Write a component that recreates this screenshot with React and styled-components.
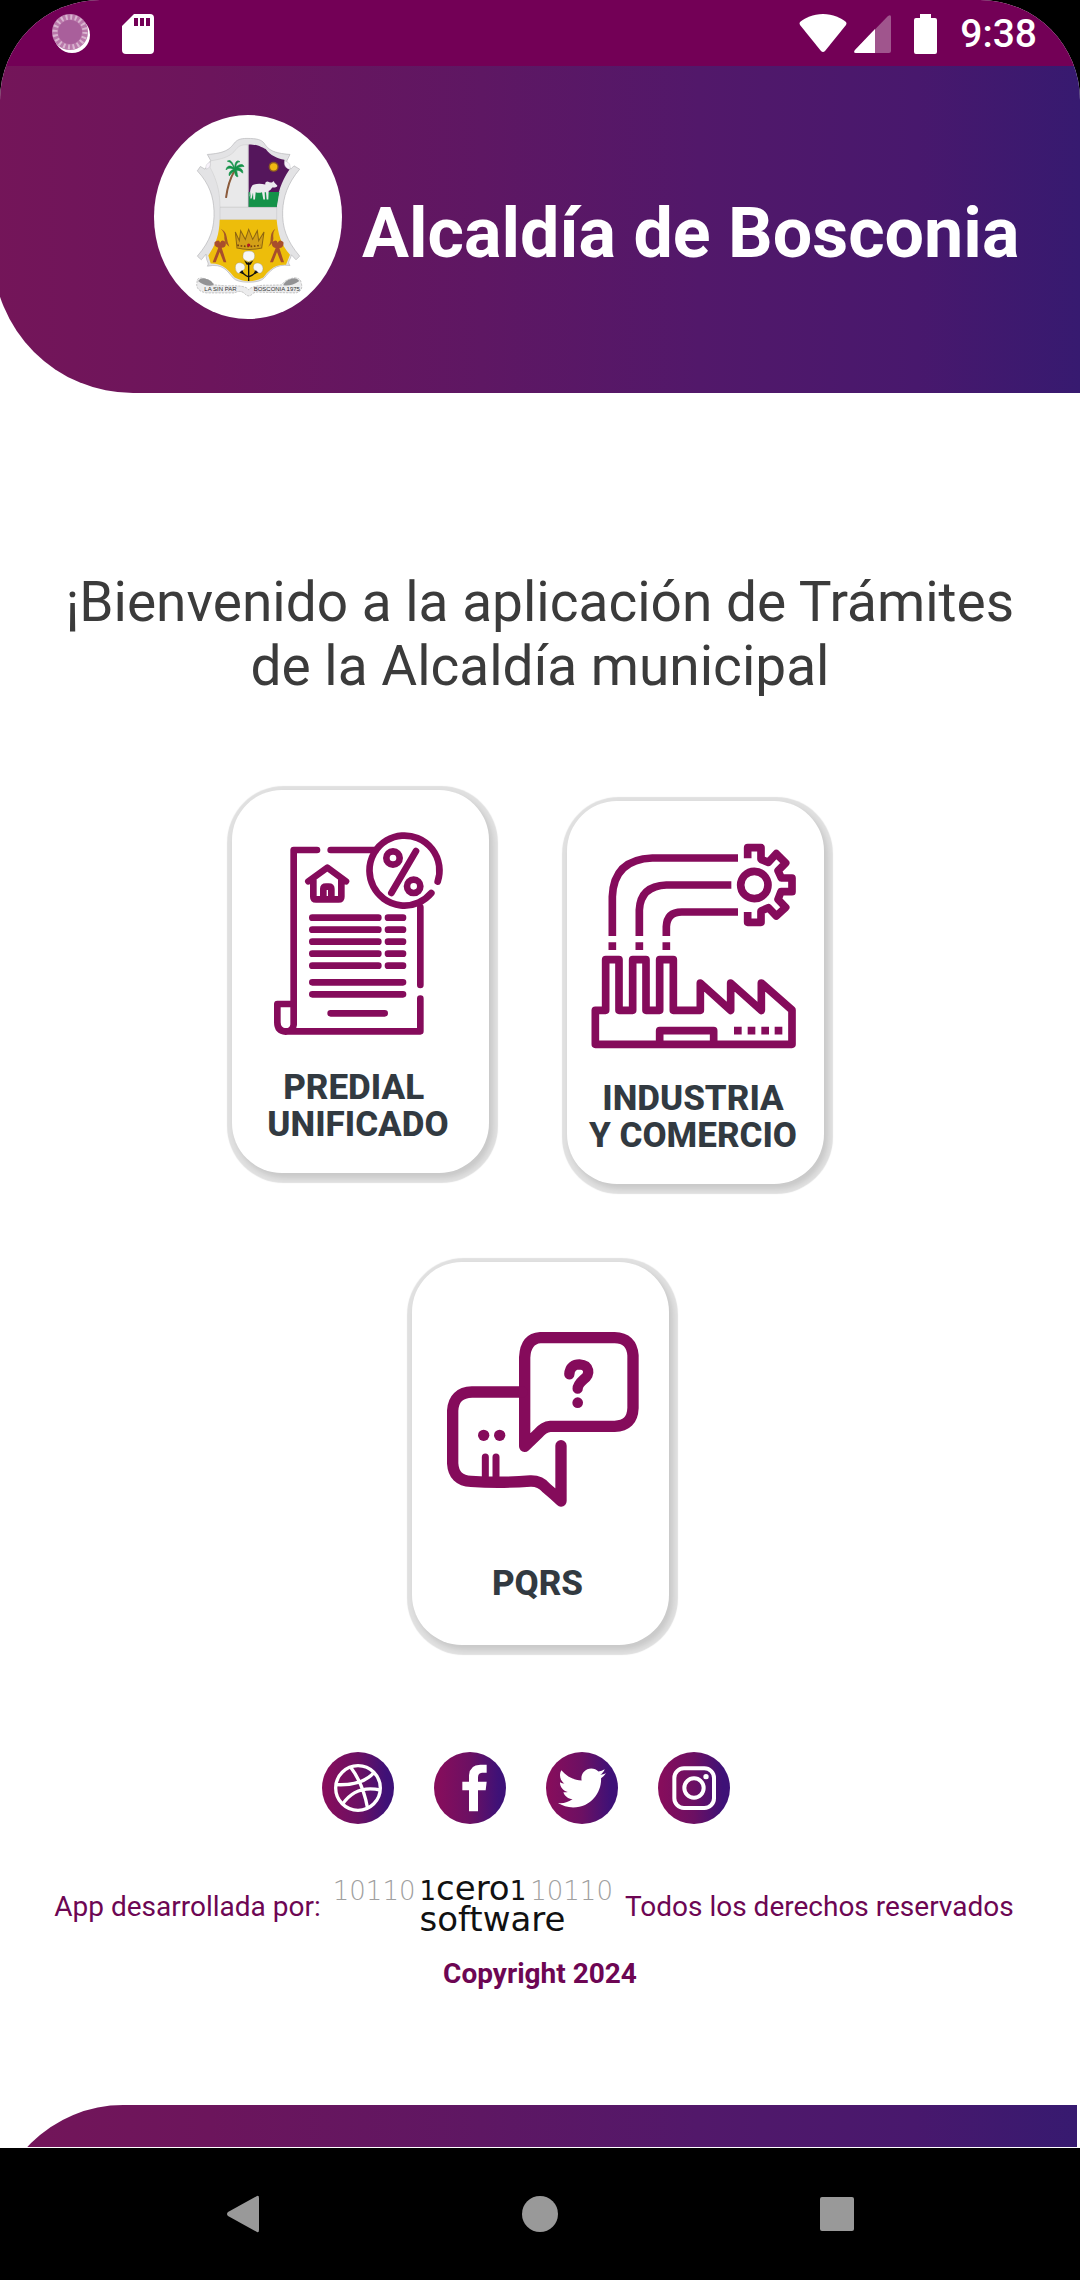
import React from 'react';
import styled, { createGlobalStyle } from 'styled-components';
import { FaTwitter } from 'react-icons/fa';

const PLUM = '#850b5b';
const band = 'linear-gradient(90deg, #741559 0%, #6c155c 20%, #5e1763 45%, #52186a 65%, #48186d 85%, #371a70 100%)';

const GlobalStyle = createGlobalStyle`
  * { box-sizing: border-box; }
  body { margin: 0; background: #000; font-family: Roboto, 'Liberation Sans', sans-serif; }
  a, button { -webkit-tap-highlight-color: transparent; }
`;

const Phone = styled.div`
  min-height: 100vh;
  display: flex;
  flex-direction: column;
  background: #000;
`;

const Screen = styled.div`
  flex: 1;
  display: flex;
  flex-direction: column;
  background: #fff;
  border-radius: 100px 100px 0 0;
  overflow: hidden;
`;

const StatusBar = styled.div`
  height: 66px;
  flex: none;
  display: flex;
  align-items: center;
  justify-content: space-between;
  padding: 2px 43px 0 52px;
  background: #730056;
  color: #fff;
`;

const StatusGroup = styled.div`
  display: flex;
  align-items: center;
  gap: ${(p) => p.$gap}px;
`;

const Clock = styled.time`
  font-size: 39px;
  line-height: 44px;
  font-weight: 500;
`;

const Header = styled.header`
  height: 327px;
  flex: none;
  margin-left: -7px;
  padding: 0 64px 0 161px;
  display: flex;
  align-items: center;
  gap: 20px;
  background: ${band};
  border-bottom-left-radius: 140px;
`;

const Crest = styled.svg`
  width: 188px;
  height: 204px;
  flex: none;
  margin-bottom: 26px;
`;

const Title = styled.h1`
  margin: 0;
  padding-top: 6px;
  color: #fff;
  font-size: 70px;
  line-height: 80px;
  font-weight: 700;
  white-space: nowrap;
`;

const Main = styled.main`
  flex: 1;
  display: flex;
  flex-direction: column;
  align-items: center;
  padding-top: 177px;
`;

const Welcome = styled.h2`
  margin: 0 60px;
  color: #3b3b3b;
  font-size: 55px;
  line-height: 64px;
  font-weight: 400;
  text-align: center;
`;

const CardRow = styled.div`
  display: flex;
  justify-content: center;
  align-items: flex-end;
  gap: 78px;
  margin-top: ${(p) => p.$top}px;
  padding-right: ${(p) => p.$shift || 0}px;
`;

const Card = styled.button`
  width: 257px;
  height: 383px;
  margin: 0 0 ${(p) => p.$lift || 0}px;
  padding: 0;
  border: 0;
  border-radius: 50px;
  background: #fff;
  display: flex;
  flex-direction: column;
  align-items: center;
  box-shadow: 3px 4px 5px 1px rgba(0, 0, 0, 0.1), 2px 3px 1px 7px #e0e0e0;
  cursor: pointer;
`;

const CardArt = styled.svg`
  width: 257px;
  height: 273px;
  flex: none;
  fill: none;
  stroke: ${PLUM};
  stroke-width: 20;
  stroke-linecap: round;
  stroke-linejoin: round;
`;

const CardLabel = styled.span`
  padding-top: ${(p) => p.$top}px;
  padding-right: 5px;
  color: #323a41;
  font: 800 35px/37px Roboto, 'Liberation Sans', sans-serif;
  text-align: center;
  white-space: pre-line;
`;

const Social = styled.nav`
  display: flex;
  gap: 40px;
  margin-top: 107px;
  padding-right: 28px;
`;

const SocialLink = styled.a`
  width: 72px;
  height: 72px;
  border-radius: 50%;
  display: flex;
  align-items: center;
  justify-content: center;
  color: #fff;
  background: linear-gradient(90deg, #860d5c 5%, #6c1063 50%, #3e1177 90%);

  svg { width: 48px; height: 48px; }
`;

const Credits = styled.footer`
  width: 100%;
  padding-top: 50px;
  display: flex;
  flex-direction: column;
  align-items: center;
  color: #6d0653;
  font-size: 28px;
  line-height: 32px;
`;

const CreditLine = styled.div`
  display: flex;
  justify-content: center;
  align-items: center;
  gap: 12px;
  padding-right: 12px;
  white-space: nowrap;
`;

const Maker = styled.div`
  display: grid;
  grid-template-columns: auto auto auto;
  column-gap: 4px;
  align-items: baseline;
  padding-bottom: 6px;
  color: #111;
  font-family: 'DejaVu Sans', sans-serif;
  font-size: 34px;
  line-height: 28px;
`;

const Digits = styled.span`
  font-size: 26px;
  color: #a0a0a0;
  font-family: 'DejaVu Sans Light', 'DejaVu Sans', sans-serif;
  font-weight: 200;
`;

const MakerName = styled.span`
  display: flex;
  align-items: baseline;
`;

const MakerDigit = styled.span`
  font-size: 26px;
`;

const MakerKind = styled.span`
  grid-column: 2 / 4;
`;

const Copyright = styled.strong`
  margin-top: 19px;
  font-weight: 700;
`;

const BottomBand = styled.div`
  height: 43px;
  flex: none;
  margin: 0 3px 0 -7px;
  overflow: hidden;
  border-bottom: 1px solid #fff;
`;

const BandShape = styled.div`
  height: 140px;
  background: ${band};
  border-top-left-radius: 130px;
`;

const NavBar = styled.nav`
  height: 132px;
  flex: none;
  display: grid;
  grid-template-columns: repeat(3, 1fr);
  padding: 0 94px;
`;

const NavButton = styled.button`
  border: 0;
  padding: 0;
  background: none;
  display: flex;
  align-items: center;
  justify-content: center;

  svg { width: 38px; height: 38px; fill: #999; }
`;

function Loader() {
  return (
    <svg width="38" height="42" viewBox="0 0 38 42" aria-hidden="true">
      <circle cx="20" cy="22" r="18" fill="#fff" />
      <circle cx="18" cy="19" r="18" fill="#b978aa" />
      <circle cx="18" cy="19" r="15" fill="none" stroke="#d9b4d0" strokeWidth="5" strokeDasharray="2 2.7" />
      <circle cx="18" cy="19" r="12" fill="#a95f9b" />
    </svg>
  );
}

function SdCard() {
  return (
    <svg width="32" height="40" viewBox="0 0 32 40" aria-hidden="true">
      <path d="M12 0h16a4 4 0 0 1 4 4v32a4 4 0 0 1-4 4H4a4 4 0 0 1-4-4V12z" fill="#fff" />
      <path d="M12 4h4v8h-4zM18 4h4v8h-4zM24 4h4v8h-4z" fill="#730056" />
    </svg>
  );
}

function Wifi() {
  return (
    <svg width="48" height="40" viewBox="0 0 48 40" aria-hidden="true">
      <path d="M24 0C14 0 6 4 1 8q-1 1 0 3l21 26q2 2 4 0l21-26q1-2 0-3C42 4 34 0 24 0z" fill="#fff" />
    </svg>
  );
}

function Signal() {
  return (
    <svg width="38" height="38" viewBox="0 0 38 38" aria-hidden="true">
      <path d="M34 1q3-2 3 1v34q0 2-2 2H2q-3 0-1-3z" fill="#a0558d" />
      <path d="M21 14v24H2q-3 0-1-3z" fill="#fff" />
    </svg>
  );
}

function Battery() {
  return (
    <svg width="24" height="40" viewBox="0 0 24 40" aria-hidden="true">
      <path d="M6 0h11v4h4q2 0 2 2v32q0 2-2 2H2q-2 0-2-2V6q0-2 2-2h4z" fill="#fff" />
    </svg>
  );
}

function Shield() {
  const frame =
    'M171 114C151 114 141 118 133 128C118 148 104 158 52 162L62 180L45 206L31 198L22 211C60 252 70 290 72 330C74 380 62 420 22 466L34 477L48 460C48 484 60 486 52 496C100 486 112 512 130 532Q142 544 176 544Q210 544 222 532C240 512 254 488 300 494C290 482 302 478 304 462L318 477L329 466C290 420 276 380 278 330C280 290 292 250 329 206L312 196L302 206L290 182L300 162C248 158 236 148 222 128C214 118 202 114 171 114Z';
  return (
    <Crest viewBox="-108 44 564 610" preserveAspectRatio="none" role="img" aria-label="Escudo de Bosconia">
      <ellipse cx="174" cy="349" rx="282" ry="305" fill="#fff" />
      <path d={frame} fill="#e3e3e5" stroke="#b5b5b8" strokeWidth="2" />
      <path d="M174 133C150 132 145 138 132 154C116 170 95 176 62 181L60 200C84 244 90 282 90 320H174Z" fill="#e9e9ea" stroke="#bcbcbc" strokeWidth="1" />
      <path d="M176 132C206 132 214 140 227 146C241 166 262 174 283 178C286 194 292 204 299 206C272 246 264 274 260 320H176Z" fill="#55165c" />
      <path d="M176 274H268L260 320H176Z" fill="#149249" />
      <path d="M90 320H260V357H90Z" fill="#e3e3e5" stroke="#b5b5b8" strokeWidth="1" />
      <path d="M89 357H260C264 398 272 430 300 462L288 492C248 490 232 516 220 530Q176 552 134 530C118 512 102 488 62 488L55 464C78 430 88 400 89 357Z" fill="#edbd0b" />
      <path d="M284 181q22 6 15 26q-20-6-15-26zM61 184q-18 8-12 22q14-4 12-22z" fill="#f7f2fa" stroke="#b5b5b8" strokeWidth="1" />
      <path d="M134 210C120 234 112 260 108 292" stroke="#8b5b3c" strokeWidth="6" fill="none" />
      <path d="M134 204C126 180 120 178 112 182C122 184 128 192 131 202C118 192 110 198 108 208C118 200 126 204 131 207C118 210 116 220 118 226C124 216 130 214 134 210C134 226 140 230 144 228C140 220 142 212 139 209C150 208 156 216 158 218C160 206 150 202 142 203C150 198 158 198 162 198C158 188 146 192 138 200C138 188 144 184 150 184C140 176 134 186 134 204Z" fill="#149249" stroke="#149249" strokeWidth="2" />
      <circle cx="251" cy="199" r="15" fill="#8c5c22" />
      <circle cx="251" cy="199" r="11" fill="#f0ba10" />
      <path d="M188 253q18-7 38-1q-2-9 7-9q8 4 14 2q5-6 6 1l8 8q4 5-6 7l-8 0q-5 8-11 10l-1 26h-5l-2-22l-4 0l1 22h-5l-4-22q-10 3-19 0l-2 22h-5l-1-21l-4 18h-4l2-25q-2 14-4 20q-1-24 9-36z" fill="#ecebee" />
      <path d="M92 384q16 8 18 24t8 30q-16-12-15-28t-11-26zM256 384q-14 10-14 28t-8 26q18-12 16-28t6-26z" fill="#a65a26" />
      <path d="M74 424q14-10 16 2q6-12 17-2q3 16-12 17l14 43h-8l-12-30l-12 30h-9l17-43q-14-4-11-17zM246 424q14-10 17 2q6-12 17-2q3 16-12 18l14 42h-9l-12-30l-12 30h-9l17-42q-14-4-11-18z" fill="#a84e2c" />
      <path d="M136 394l12 26l4-30l14 26l10-30l12 30l14-26l4 30l16-26l-7 48q-39 8-74 0z" fill="#d3a017" stroke="#8c6511" strokeWidth="3" />
      <path d="M142 433q34 8 70 0" fill="none" stroke="#75430d" strokeWidth="5" strokeDasharray="5 5" />
      <circle cx="176" cy="433" r="5" fill="#b51b24" />
      <path d="M176 484v56M176 528q-16-6-22-20M176 528q18-6 26-20" stroke="#111" strokeWidth="4" fill="none" />
      <path d="M162 478l14 9l14-9l-8 14h-12zM140 512l18-8l2 16zM212 512l-16-8l-4 16z" fill="#111" />
      <g fill="#f7f7f5" stroke="#888" strokeWidth="1">
        <path d="M159 464q0-14 17-13q18-1 18 14q0 14-12 15l-6 3l-7-3q-12-4-10-16z" />
        <path d="M136 500q0-16 16-14q16 4 12 18q-4 6-10 6l-8 8q-10-4-10-18z" />
        <path d="M190 500q0-16 17-13q12 4 12 16q-1 14-12 14l-8-7q-10-2-9-10z" />
      </g>
      <path d="M22 536Q28 528 46 534Q66 540 72 552L110 555Q166 552 176 566Q190 552 238 553L276 552Q284 536 312 531Q332 530 334 548Q340 570 318 576L210 574Q196 572 188 578Q176 592 164 578Q150 566 134 576L50 576Q22 572 20 552Z" fill="#ececed" stroke="#aaa" strokeWidth="2" strokeDasharray="7 3" />
      <path d="M24 540q10-14 32-3q14 8 15 16q-24 6-47-13zM328 540q-10-14-32-3q-14 8-16 16q24 4 48-13z" fill="#929294" />
      <g fill="#333" fontFamily="'Liberation Sans', sans-serif" fontSize="18">
        <text x="43" y="571">LA SIN PAR</text>
        <text x="191" y="571">BOSCONIA 1975</text>
      </g>
    </Crest>
  );
}

function TaxArt() {
  return (
    <CardArt viewBox="35 31 771 819" aria-hidden="true">
      <path d="M290 211H220V735Q218 756 196 756Q171 754 171 728V673H212M331 211H466M600 382V616M600 657V755H196" />
      <path d="M633 340A105 105 0 1 1 652 306" />
      <path d="M587 214L513 340" />
      <circle cx="518" cy="235" r="20" />
      <circle cx="580" cy="320" r="20" />
      <path d="M264 305L321 264L377 305M279 302V351Q279 359 287 359H355Q363 359 363 351V302M309 358V328Q309 321 317 321H325Q333 321 333 328V358" />
      <path d="M276 414H474M503 414H548M276 450H474M503 450H548M276 486H474M503 486H548M276 522H474M503 522H548M276 558H474M503 558H548M276 608H548M276 644H548M331 701H493" />
    </CardArt>
  );
}

function FactoryArt() {
  return (
    <CardArt viewBox="52 63 771 819" aria-hidden="true">
      <g strokeWidth="23" strokeLinecap="butt">
        <path d="M188 468V350Q192 238 308 234H565M269 468V390Q272 318 350 315H545M350 468V440Q352 396 396 396H565" />
        <path d="M188 487V510M269 487V510M350 487V510" />
        <path d="M137 793V691H168V539H208V691H249V539H289V691H330V539H371V691H452V609L543 691V609L635 691V609L727 690V793ZM330 793V752H492V793" />
        <path d="M553 752H576M594 752H617M635 752H658M675 752H698" />
        <circle cx="614" cy="315" r="41" />
        <path d="M594 235V203H634V238L656 247L680 221L708 249L685 272L695 294H727V335H694L685 358L708 382L680 408L656 383L634 393V427H594V396" />
      </g>
    </CardArt>
  );
}

function ChatArt() {
  return (
    <CardArt viewBox="35 36 771 819" aria-hidden="true">
      <g strokeWidth="34">
        <path d="M373 589V322Q376 266 420 263H643Q694 264 698 316V474Q696 528 643 529H450Q430 530 412 552Z" />
        <path d="M365 426H215Q160 428 157 482V640Q160 692 212 694Q300 700 390 693Q420 692 438 714Q462 734 482 753V587" />
        <path d="M507 373C508 350 523 343 537 343C568 345 572 374 550 388Q532 404 532 416" strokeWidth="31" />
      </g>
      <path d="M255 621V680M287 621V680" strokeWidth="21" />
      <g fill={PLUM} stroke="none">
        <circle cx="250" cy="556" r="17" />
        <circle cx="298" cy="556" r="17" />
        <circle cx="532" cy="458" r="16" />
      </g>
    </CardArt>
  );
}

function Dribbble() {
  return (
    <svg viewBox="0 0 144 144" fill="none" stroke="#fff" strokeWidth="10" aria-hidden="true">
      <circle cx="72" cy="72" r="67" />
      <path d="M50 10Q88 60 101 134M6 62Q84 66 120 26M26 120Q66 62 139 78" />
    </svg>
  );
}

function Facebook() {
  return (
    <svg viewBox="0 0 144 144" fill="#fff" aria-hidden="true">
      <path d="M69 142V79H49V53H69V34Q71 2 103 2H122V26H108Q96 27 96 40V53H122L119 79H96V142Z" />
    </svg>
  );
}

function Instagram() {
  return (
    <svg viewBox="0 0 144 144" fill="none" stroke="#fff" strokeWidth="12" aria-hidden="true">
      <rect x="13" y="13" width="119" height="119" rx="29" />
      <circle cx="72" cy="72" r="29" />
      <circle cx="108" cy="38" r="8" fill="#fff" stroke="none" />
    </svg>
  );
}

export default function App() {
  return (
    <Phone>
      <GlobalStyle />
      <Screen>
        <StatusBar>
          <StatusGroup $gap={32}>
            <Loader />
            <SdCard />
          </StatusGroup>
          <StatusGroup $gap={22}>
            <StatusGroup $gap={7}>
              <Wifi />
              <Signal />
            </StatusGroup>
            <Battery />
            <Clock>9:38</Clock>
          </StatusGroup>
        </StatusBar>
        <Header>
          <Shield />
          <Title>Alcaldía de Bosconia</Title>
        </Header>
        <Main>
          <Welcome>¡Bienvenido a la aplicación de Trámites de la Alcaldía municipal</Welcome>
          <CardRow $top={92} $shift={24}>
            <Card type="button" $lift={11}>
              <TaxArt />
              <CardLabel $top={6}>{'PREDIAL\u00a0\nUNIFICADO'}</CardLabel>
            </Card>
            <Card type="button">
              <FactoryArt />
              <CardLabel $top={6}>{'INDUSTRIA\nY COMERCIO'}</CardLabel>
            </Card>
          </CardRow>
          <CardRow $top={78}>
            <Card type="button">
              <ChatArt />
              <CardLabel $top={30}>PQRS</CardLabel>
            </Card>
          </CardRow>
          <Social aria-label="Redes sociales">
            <SocialLink href="#dribbble" aria-label="Dribbble"><Dribbble /></SocialLink>
            <SocialLink href="#facebook" aria-label="Facebook"><Facebook /></SocialLink>
            <SocialLink href="#twitter" aria-label="Twitter"><FaTwitter /></SocialLink>
            <SocialLink href="#instagram" aria-label="Instagram"><Instagram /></SocialLink>
          </Social>
          <Credits>
            <CreditLine>
              <span>App desarrollada por:</span>
              <Maker>
                <Digits>10110</Digits>
                <MakerName>
                  <MakerDigit>1</MakerDigit>
                  <span>cero</span>
                  <MakerDigit>1</MakerDigit>
                </MakerName>
                <Digits>10110</Digits>
                <MakerKind>software</MakerKind>
              </Maker>
              <span>Todos los derechos reservados</span>
            </CreditLine>
            <Copyright>Copyright 2024</Copyright>
          </Credits>
        </Main>
        <BottomBand><BandShape /></BottomBand>
      </Screen>
      <NavBar aria-label="Sistema">
        <NavButton type="button" aria-label="Atrás">
          <svg viewBox="0 0 38 38"><path d="M33 1q2-1 2 2v32q0 3-2 2L4 21q-2-2 0-4z" /></svg>
        </NavButton>
        <NavButton type="button" aria-label="Inicio">
          <svg viewBox="0 0 38 38"><circle cx="19" cy="19" r="18" /></svg>
        </NavButton>
        <NavButton type="button" aria-label="Recientes">
          <svg viewBox="0 0 38 38"><rect x="2" y="2" width="34" height="34" rx="2" /></svg>
        </NavButton>
      </NavBar>
    </Phone>
  );
}
